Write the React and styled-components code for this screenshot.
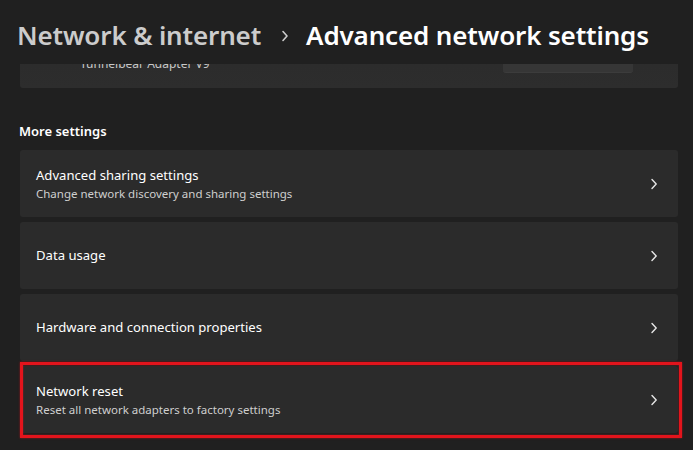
import React from "react";
import styled, { createGlobalStyle } from "styled-components";

const GlobalStyle = createGlobalStyle`
  html, body {
    margin: 0;
    padding: 0;
    background: #202020;
  }
  body {
    font-family: "Segoe UI", "Noto Sans", "Open Sans", sans-serif;
    color: #ffffff;
  }
`;

const Page = styled.div`
  width: 693px;
  height: 450px;
  overflow: hidden;
  display: flex;
  flex-direction: column;
  background: #202020;
`;

const Header = styled.div`
  height: 64px;
  flex-shrink: 0;
  display: flex;
  align-items: center;
  padding: 5px 0 0 17px;
  box-sizing: border-box;
  font-size: 26px;
  font-weight: 600;
  letter-spacing: -0.15px;
  position: relative;
  z-index: 1;
  background: #202020;
`;

const Crumb = styled.span`
  color: ${(p) => (p.current ? "#ffffff" : "#cccccc")};
  white-space: nowrap;
`;

const Sep = styled.svg`
  margin: 2px 17px 0 20px;
  flex-shrink: 0;
`;

const Content = styled.div`
  flex: 1;
  overflow: hidden;
  padding: 0 15px 0 20px;
`;

const Card = styled.div`
  position: relative;
  height: 67px;
  background: #2b2b2b;
  border-radius: 3px;
  display: flex;
  align-items: center;
  padding: 0 20px 0 16px;
  box-sizing: border-box;
`;

const ScrolledCard = styled(Card)`
  margin-top: -43px;
  align-items: flex-end;
  padding-bottom: 16px;
  background: linear-gradient(#2a2a2a, #2d2d2d);
`;

const AdapterName = styled.span`
  margin-left: 44px;
  font-size: 12px;
  color: #c8c8c8;
  flex: 1;
`;

const AdapterButton = styled.div`
  width: 130px;
  height: 30px;
  margin-right: 25px;
  margin-bottom: -1px;
  border-radius: 3px;
  background: #363636;
  border-bottom: 1px solid #3c3c3c;
`;

const SectionLabel = styled.div`
  margin: 33px 0 9px -1px;
  font-size: 13px;
  font-weight: 600;
  color: #ffffff;
  line-height: 20px;
`;

const List = styled.div`
  display: flex;
  flex-direction: column;
  gap: 5px;
`;

const Texts = styled.div`
  flex: 1;
  display: flex;
  flex-direction: column;
`;

const Title = styled.div`
  font-size: 13.1px;
  color: #ffffff;
  line-height: 19px;
`;

const Sub = styled.div`
  font-size: 11.5px;
  color: #cfcfcf;
  line-height: 17px;
`;

const Highlight = styled.div`
  position: absolute;
  top: -4px;
  left: 0;
  right: -4px;
  bottom: -5px;
  border: 3px solid #e3141c;
  box-shadow: 0 0 2px rgba(227, 20, 28, 0.6), inset 0 0 2px rgba(227, 20, 28, 0.6);
  pointer-events: none;
`;

function Chevron() {
  return (
    <svg width="8" height="12" viewBox="0 0 8 12">
      <path
        d="M2 1.5 L6.2 6 L2 10.5"
        fill="none"
        stroke="#e6e6e6"
        strokeWidth="1.4"
        strokeLinecap="round"
        strokeLinejoin="round"
      />
    </svg>
  );
}

const items = [
  {
    title: "Advanced sharing settings",
    sub: "Change network discovery and sharing settings",
  },
  { title: "Data usage" },
  { title: "Hardware and connection properties" },
  {
    title: "Network reset",
    sub: "Reset all network adapters to factory settings",
    marked: true,
  },
];

export default function App() {
  return (
    <>
      <GlobalStyle />
      <Page>
        <Header>
          <Crumb>Network &amp; internet</Crumb>
          <Sep width="8" height="14" viewBox="0 0 8 14">
            <path
              d="M2 2.5 L6 7 L2 11.5"
              fill="none"
              stroke="#cccccc"
              strokeWidth="1.6"
              strokeLinecap="round"
              strokeLinejoin="round"
            />
          </Sep>
          <Crumb current>Advanced network settings</Crumb>
        </Header>
        <Content>
          <ScrolledCard>
            <AdapterName>Tunnelbear Adapter V9</AdapterName>
            <AdapterButton />
          </ScrolledCard>
          <SectionLabel>More settings</SectionLabel>
          <List>
            {items.map((it) => (
              <Card key={it.title}>
                <Texts>
                  <Title>{it.title}</Title>
                  {it.sub && <Sub>{it.sub}</Sub>}
                </Texts>
                <Chevron />
                {it.marked && <Highlight />}
              </Card>
            ))}
          </List>
        </Content>
      </Page>
    </>
  );
}
